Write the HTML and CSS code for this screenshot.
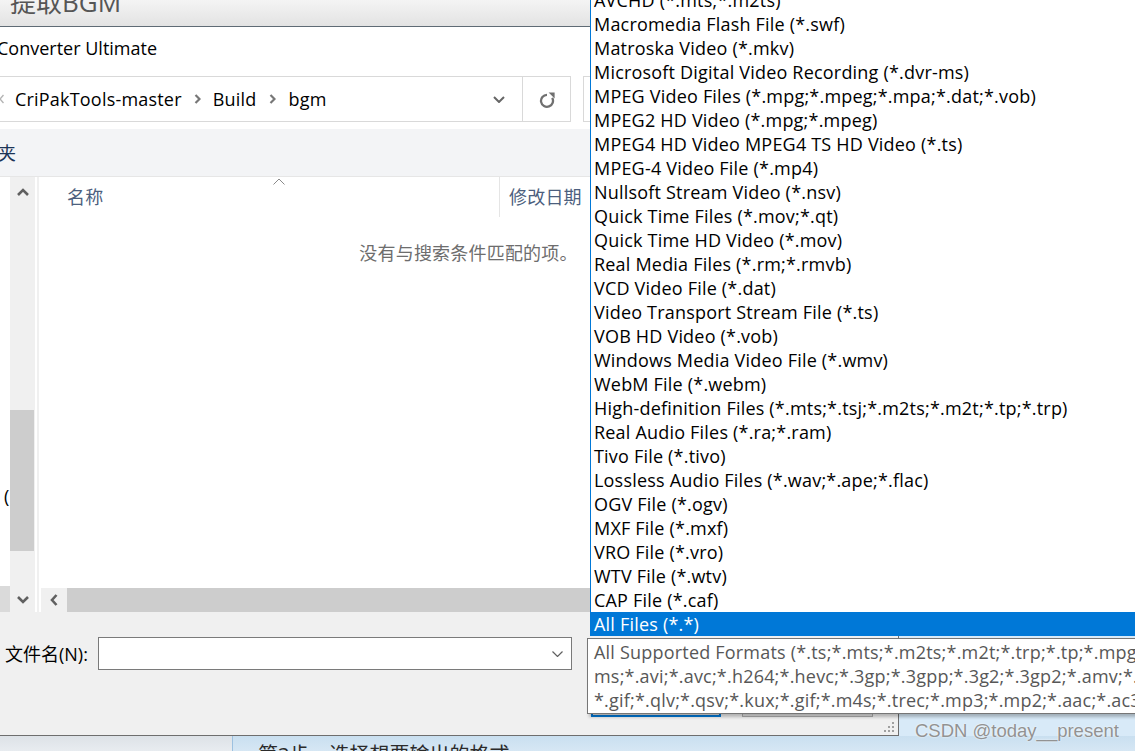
FILE: index.html
```html
<!DOCTYPE html>
<html lang="zh-CN">
<head>
<meta charset="utf-8">
<title>提取BGM</title>
<link rel="stylesheet" href="styles.css">
</head>
<body>
  <div class="topstrip"><div class="apptitle">提取BGM</div></div>

  <div class="middle">
    <div class="dialog">
      <div class="titlebar"><span class="dtitle">Converter Ultimate</span></div>

      <div class="addr">
        <div class="crumb">
          <svg class="back" width="4" height="10" viewBox="0 0 4 10"><path d="M3.5 1 L0 5 L3.5 9" fill="none" stroke="#b4b4b4" stroke-width="1.4"/></svg>
          <span class="c1">CriPakTools-master</span>
          <svg class="sep" width="7" height="10" viewBox="0 0 7 10"><path d="M1.5 1 L5.5 5 L1.5 9" fill="none" stroke="#777" stroke-width="2.2"/></svg>
          <span class="c2">Build</span>
          <svg class="sep" width="7" height="10" viewBox="0 0 7 10"><path d="M1.5 1 L5.5 5 L1.5 9" fill="none" stroke="#777" stroke-width="2.2"/></svg>
          <span class="c3">bgm</span>
          <svg class="ddchev" width="12" height="7" viewBox="0 0 12 7"><path d="M1 1 L6 6 L11 1" fill="none" stroke="#666" stroke-width="2"/></svg>
        </div>
        <div class="refresh">
          <svg width="18" height="17" viewBox="0 0 18 17"><path d="M9 3.8 A6 6 0 1 0 14.2 6.8" fill="none" stroke="#707070" stroke-width="2.3"/><polygon points="10.6,1.6 16.6,1.6 16.6,7.6" fill="#707070"/></svg>
        </div>
        <div class="search"></div>
      </div>

      <div class="toolbar"><span class="tbtext">夹</span></div>

      <div class="panes">
        <div class="navedge">
          <div class="navparen">(</div>
          <div class="navstub"></div>
        </div>
        <div class="vscroll">
          <div class="sbtn up"><svg width="12" height="8" viewBox="0 0 12 8"><path d="M1 7 L6 2 L11 7" fill="none" stroke="#606060" stroke-width="2.6"/></svg></div>
          <div class="thumb"></div>
          <div class="sbtn down"><svg width="12" height="8" viewBox="0 0 12 8"><path d="M1 1 L6 6 L11 1" fill="none" stroke="#606060" stroke-width="2.6"/></svg></div>
        </div>
        <div class="splitter"></div>
        <div class="content">
          <div class="colhead">
            <div class="col-name">名称
              <svg class="sortarrow" width="12" height="7" viewBox="0 0 12 7"><path d="M0.5 6.5 L6 1 L11.5 6.5" fill="none" stroke="#8a8a8a" stroke-width="1"/></svg>
            </div>
            <div class="col-date">修改日期</div>
          </div>
          <div class="empty">没有与搜索条件匹配的项。</div>
          <div class="hscroll">
            <div class="hbtn"><svg width="8" height="12" viewBox="0 0 8 12"><path d="M6.5 1 L2 6 L6.5 11" fill="none" stroke="#606060" stroke-width="2.6"/></svg></div>
            <div class="hthumb"></div>
          </div>
        </div>
      </div>

      <div class="filearea">
        <div class="filerow">
          <div class="flabel">文件名(N):</div>
          <div class="fname"><svg width="11" height="6" viewBox="0 0 11 6"><path d="M0.5 0.5 L5.5 5.5 L10.5 0.5" fill="none" stroke="#606060" stroke-width="1.2"/></svg></div>
        </div>
        <div class="btnrow">
          <div class="btn primary"></div>
          <div class="btn"></div>
        </div>
      </div>

      <svg class="grip" width="11" height="11" viewBox="0 0 11 11">
        <rect x="8" y="0" width="2" height="2" fill="#a0a0a0"/>
        <rect x="4" y="4" width="2" height="2" fill="#a0a0a0"/><rect x="8" y="4" width="2" height="2" fill="#a0a0a0"/>
        <rect x="0" y="8" width="2" height="2" fill="#a0a0a0"/><rect x="4" y="8" width="2" height="2" fill="#a0a0a0"/><rect x="8" y="8" width="2" height="2" fill="#a0a0a0"/>
      </svg>
    </div>
    <div class="desk"></div>
  </div>

  <div class="bottombar">
    <div class="bb-left"></div>
    <div class="bb-right">第3步，选择想要输出的格式</div>
  </div>

  <ul class="typelist">
    <li>AVCHD (*.mts;*.m2ts)</li>
    <li>Macromedia Flash File (*.swf)</li>
    <li>Matroska Video (*.mkv)</li>
    <li>Microsoft Digital Video Recording (*.dvr-ms)</li>
    <li>MPEG Video Files (*.mpg;*.mpeg;*.mpa;*.dat;*.vob)</li>
    <li>MPEG2 HD Video (*.mpg;*.mpeg)</li>
    <li>MPEG4 HD Video MPEG4 TS HD Video (*.ts)</li>
    <li>MPEG-4 Video File (*.mp4)</li>
    <li>Nullsoft Stream Video (*.nsv)</li>
    <li>Quick Time Files (*.mov;*.qt)</li>
    <li>Quick Time HD Video (*.mov)</li>
    <li>Real Media Files (*.rm;*.rmvb)</li>
    <li>VCD Video File (*.dat)</li>
    <li>Video Transport Stream File (*.ts)</li>
    <li>VOB HD Video (*.vob)</li>
    <li>Windows Media Video File (*.wmv)</li>
    <li>WebM File (*.webm)</li>
    <li>High-definition Files (*.mts;*.tsj;*.m2ts;*.m2t;*.tp;*.trp)</li>
    <li>Real Audio Files (*.ra;*.ram)</li>
    <li>Tivo File (*.tivo)</li>
    <li>Lossless Audio Files (*.wav;*.ape;*.flac)</li>
    <li>OGV File (*.ogv)</li>
    <li>MXF File (*.mxf)</li>
    <li>VRO File (*.vro)</li>
    <li>WTV File (*.wtv)</li>
    <li>CAP File (*.caf)</li>
    <li class="sel">All Files (*.*)</li>
  </ul>

  <div class="tooltip">
    <div>All Supported Formats (*.ts;*.mts;*.m2ts;*.m2t;*.trp;*.tp;*.mpg;*.mpeg;*.mpe;*.m1v;*.m2v;*.mpv;*.dat;*.vob;*.dvr-</div>
    <div>ms;*.avi;*.avc;*.h264;*.hevc;*.3gp;*.3gpp;*.3g2;*.3gp2;*.amv;*.mtv;*.mkv;*.mov;*.qt;*.m4v;*.mp4;*.f4v;*.flv;</div>
    <div>*.gif;*.qlv;*.qsv;*.kux;*.gif;*.m4s;*.trec;*.mp3;*.mp2;*.aac;*.ac3;*.aax;*.aiff;*.ape;*.flac;</div>
  </div>

  <div class="watermark">CSDN @today__present</div>
</body>
</html>
```

FILE: styles.css
```css
* { box-sizing: border-box; }
html, body { margin: 0; padding: 0; }
body {
  width: 1135px;
  height: 751px;
  overflow: hidden;
  position: relative;
  font-family: "Open Sans", "Noto Sans CJK SC", sans-serif;
  font-size: 18px;
  line-height: 24px;
  letter-spacing: 0.2px;
  color: #000;
  background: #d8eaf8;
  display: flex;
  flex-direction: column;
}

/* top strip of the application behind the dialog */
.topstrip {
  height: 27px;
  flex: none;
  background: linear-gradient(#f4f4f4, #e3e3e3);
  border-bottom: 1px solid #5f6b75;
  padding-left: 10px;
  overflow: hidden;
}
.apptitle {
  font-size: 26px;
  line-height: 26px;
  margin-top: -11px;
  color: #565656;
  white-space: nowrap;
  letter-spacing: 0;
}

.middle { display: flex; height: 709px; flex: none; }

.dialog {
  width: 899px;
  flex: none;
  display: flex;
  flex-direction: column;
  background: #fff;
  border-right: 1px solid #6e6e6e;
  border-bottom: 1px solid #6e6e6e;
  position: relative;
}
.desk { flex: 1; background: #d8eaf8; }

.titlebar { height: 49px; flex: none; padding-top: 9px; white-space: nowrap; letter-spacing: 0; }
.dtitle { margin-left: -3px; }

.addr { height: 46px; flex: none; display: flex; }
.crumb {
  width: 524px;
  margin-left: -1px;
  border: 1px solid #d9d9d9;
  display: flex;
  align-items: center;
  white-space: nowrap;
}
.crumb .back { flex: none; }
.crumb .c1 { margin-left: 11px; }
.crumb .sep { margin-left: 12px; flex: none; }
.crumb .c2 { margin-left: 12px; }
.crumb .c3 { margin-left: 13px; }
.crumb .ddchev { margin-left: auto; margin-right: 17px; flex: none; }
.refresh {
  width: 48px;
  border: 1px solid #d9d9d9;
  border-left: none;
  display: flex;
  align-items: center;
  justify-content: center;
}
.search { margin-left: 12px; width: 300px; border: 1px solid #d9d9d9; }

.toolbar {
  height: 48px;
  flex: none;
  margin-top: 7px;
  background: #f3f4f6;
  border-bottom: 1px solid #e6e6e6;
  display: flex;
  align-items: center;
  color: #1d3557;
}
.tbtext { margin-left: -2px; }

.panes { display: flex; height: 435px; flex: none; }
.navedge { width: 10px; display: flex; flex-direction: column; overflow: hidden; }
.navparen { margin-top: 307px; padding-left: 4px; }
.navstub { margin-top: auto; height: 26px; background: #dadada; }

.vscroll { width: 25px; background: #f0f0f0; display: flex; flex-direction: column; }
.sbtn { display: flex; align-items: center; justify-content: center; }
.sbtn.up { height: 30px; }
.sbtn.down { height: 24px; margin-top: auto; }
.thumb { margin-top: 203px; height: 141px; width: 24px; background: #cdcdcd; }

.splitter { width: 4px; background: linear-gradient(to right, #fff 0 2px, #f0f0f0 2px 4px); }

.content { flex: 1; display: flex; flex-direction: column; }
.colhead { height: 40px; display: flex; flex: none; color: #4c5f7e; }
.col-name {
  width: 461px;
  position: relative;
  padding-left: 28px;
  display: flex;
  align-items: center;
  border-right: 1px solid #e5e5e5;
}
.sortarrow { position: absolute; left: 234px; top: 1px; }
.col-date { padding-left: 9px; display: flex; align-items: center; }
.empty { margin-top: 24px; text-align: center; color: #6d6d6d; }
.hscroll { margin-top: auto; margin-left: 2px; height: 24px; display: flex; background: #f0f0f0; }
.hbtn { width: 26px; display: flex; align-items: center; justify-content: center; }
.hthumb { flex: 1; background: #cdcdcd; }

.filearea { flex: 1; background: #f0f0f0; }
.filerow { display: flex; align-items: center; padding-top: 25px; }
.flabel { width: 98px; padding-left: 5px; white-space: nowrap; letter-spacing: 0; }
.fname {
  width: 474px;
  height: 33px;
  border: 1px solid #7a7a7a;
  background: #fff;
  display: flex;
  align-items: center;
  justify-content: flex-end;
  padding-right: 8px;
}
.btnrow { display: flex; justify-content: flex-end; gap: 21px; padding-right: 25px; margin-top: 17px; }
.btn {
  height: 30px;
  width: 131px;
  border: 1px solid #adadad;
  background: #e1e1e1;
}
.btn.primary { width: 130px; border: 2px solid #0078d7; }

.grip { position: absolute; right: 3px; bottom: 2px; }

.bottombar { height: 15px; flex: none; display: flex; overflow: hidden; }
.bb-left {
  width: 233px;
  background: linear-gradient(#dde2e7, #e8ecf0);
  border-right: 1px solid #9dc1e0;
}
.bb-right {
  flex: 1;
  background: linear-gradient(#c9dff0, #d6e7f4);
  padding-left: 25px;
  padding-top: 8px;
  font-size: 20px;
  line-height: 22px;
  letter-spacing: 0;
  color: #2b2b2b;
  white-space: nowrap;
}

/* open file-type drop-down list */
.typelist {
  position: absolute;
  left: 590px;
  top: -12px;
  width: 560px;
  margin: 0;
  padding: 0;
  list-style: none;
  background: #fff;
  border-left: 1px solid #0078d7;
}
.typelist li { height: 24px; padding-left: 3px; white-space: nowrap; }
.typelist li.sel { background: #0078d7; color: #fff; }

.tooltip {
  position: absolute;
  left: 587px;
  top: 638px;
  width: 600px;
  height: 76px;
  background: #fff;
  border: 1px solid #767676;
  color: #575757;
  padding: 1px 0 0 6px;
  white-space: nowrap;
  overflow: hidden;
  box-shadow: 2px 3px 3px rgba(0, 0, 0, 0.25);
}

.watermark {
  position: absolute;
  left: 915px;
  top: 719px;
  font-family: "Liberation Sans", Arial, sans-serif;
  font-size: 18.5px;
  line-height: 24px;
  letter-spacing: 0;
  color: #929292;
  white-space: nowrap;
  text-shadow: 0 0 2px #fff;
}
```
